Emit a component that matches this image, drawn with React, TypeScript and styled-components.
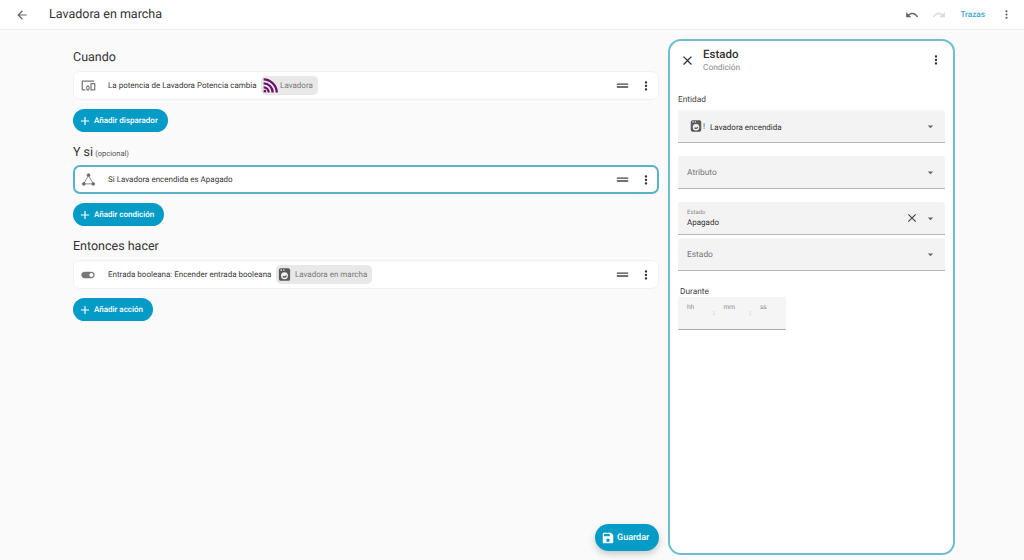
import React from "react";
import styled, { createGlobalStyle } from "styled-components";
import {
  MdAdd,
  MdArrowBack,
  MdArrowDropDown,
  MdClose,
  MdDevicesOther,
  MdDragHandle,
  MdMoreVert,
  MdRedo,
  MdSave,
  MdToggleOn,
  MdUndo,
} from "react-icons/md";

const GlobalStyle = createGlobalStyle`
  html, body {
    margin: 0;
    height: 100%;
    background: #fafafa;
    font-family: Roboto, "Noto Sans", sans-serif;
    color: #2b2b2b;
    text-rendering: geometricPrecision;
  }
  * { box-sizing: border-box; }
  button { text-rendering: geometricPrecision; }
`;

const Page = styled.div`
  width: 1024px;
  height: 560px;
  overflow: hidden;
  position: relative;
  background: #fafafa;
`;

const TopBar = styled.header`
  height: 30px;
  background: #fff;
  border-bottom: 1px solid #efefef;
  display: flex;
  align-items: center;
  padding: 0 11px 0 15px;
`;

const PageTitle = styled.h1`
  margin: 0 0 0 20px;
  font-size: 12.5px;
  font-weight: 400;
  flex: 1;
  color: #333;
`;

const TopIcon = styled.span<{ $faded?: boolean; $gap?: number }>`
  display: flex;
  color: ${(p) => (p.$faded ? "#d8d8d8" : "#666")};
  margin-left: ${(p) => p.$gap ?? 0}px;
`;

const TraceLink = styled.span`
  font-size: 8.2px;
  font-weight: 500;
  color: #3ba6c8;
  margin: 0 15px 0 14px;
`;

const Body = styled.div`
  display: flex;
  align-items: flex-start;
  padding: 9px 0 0 73px;
  gap: 9px;
`;

const Main = styled.main`
  width: 586px;
  padding-top: 10px;
`;

const SectionTitle = styled.h2<{ $top?: number; $bottom?: number }>`
  margin: ${(p) => p.$top ?? 0}px 0 ${(p) => p.$bottom ?? 6}px;
  height: 16px;
  line-height: 18px;
  font-size: 12.5px;
  font-weight: 400;
  color: #333;
  small {
    font-size: 7.5px;
    margin-left: -1px;
    color: #555;
  }
`;

const Card = styled.div<{ $active?: boolean }>`
  height: 29px;
  display: flex;
  align-items: center;
  background: #fff;
  border-radius: 7px;
  padding: ${(p) => (p.$active ? "0 4px 0 5px" : "0 5px 0 6px")};
  border: ${(p) => (p.$active ? "2px solid #58b3c9" : "1px solid #f1f1f1")};
`;

const RowIcon = styled.span`
  width: 16px;
  height: 16px;
  display: flex;
  align-items: center;
  justify-content: center;
  color: #777;
  flex: none;
`;

const RowText = styled.span`
  margin-left: 12px;
  font-size: 8px;
  color: #3a3a3a;
  white-space: nowrap;
`;

const Chip = styled.span<{ $gap: number; $pad: number }>`
  display: inline-flex;
  align-items: center;
  gap: ${(p) => p.$gap}px;
  height: 19px;
  margin-left: 4.5px;
  padding: 0 5px 0 ${(p) => p.$pad}px;
  border-radius: 5px;
  background: #e8e8e8;
  font-size: 8px;
  color: #7b7b7b;
  white-space: nowrap;
`;

const Handle = styled.span`
  margin-left: auto;
  display: flex;
  color: #444;
`;

const Kebab = styled.span`
  display: flex;
  margin-left: 8px;
  color: #333;
`;

const AddButton = styled.button`
  display: flex;
  align-items: center;
  gap: 2px;
  height: 23px;
  margin-top: 9px;
  padding: 0 10px 0 5px;
  border: none;
  border-radius: 12px;
  background: #049cc6;
  color: #fff;
  font-family: inherit;
  font-size: 8px;
  font-weight: 500;
`;

const Panel = styled.aside`
  width: 286.5px;
  height: 516px;
  background: #fff;
  border: 2px solid #6fbdcf;
  border-radius: 13px;
  padding: 0 8px;
`;

const PanelHead = styled.div`
  display: flex;
  align-items: center;
  height: 38px;
  padding-left: 1.5px;
`;

const PanelClose = styled.span`
  display: flex;
  color: #333;
`;

const PanelTitles = styled.div`
  margin-left: 8.5px;
  flex: 1;
`;

const PanelTitle = styled.div`
  font-size: 11.5px;
  font-weight: 500;
  line-height: 14px;
  color: #333;
`;

const PanelSub = styled.div`
  margin-top: 2px;
  font-size: 8.3px;
  line-height: 11px;
  color: #8a8a8a;
`;

const PanelKebab = styled.span`
  display: flex;
  color: #333;
  margin-right: 2px;
`;

const FieldLabel = styled.div<{ $top: number; $bottom: number; $left?: number }>`
  margin: ${(p) => p.$top}px 0 ${(p) => p.$bottom}px ${(p) => p.$left ?? 0}px;
  font-size: 8.3px;
  line-height: 10px;
  color: #444;
`;

const Select = styled.div<{ $top?: number }>`
  height: 33px;
  margin-top: ${(p) => p.$top ?? 0}px;
  display: flex;
  align-items: center;
  background: #f3f3f3;
  border-bottom: 1px solid #b5b5b5;
  border-radius: 3px 3px 0 0;
  padding: 0 8px 0 9px;
`;

const SelectBody = styled.div`
  flex: 1;
  min-width: 0;
`;

const SelectValue = styled.span<{ $muted?: boolean }>`
  display: block;
  padding-top: 2px;
  line-height: 11px;
  font-size: ${(p) => (p.$muted ? 8.4 : 8)}px;
  color: ${(p) => (p.$muted ? "#777" : "#333")};
`;

const FloatLabel = styled.div`
  margin-bottom: -2px;
  font-size: 6px;
  line-height: 8px;
  color: #8a8a8a;
`;

const SelectCaret = styled.span`
  display: flex;
  color: #666;
`;

const ClearIcon = styled.span`
  display: flex;
  color: #444;
  margin-right: 5px;
`;

const EntityIcon = styled.span`
  display: flex;
  align-items: center;
  margin: 0 5px 0 2px;
  color: #555;
  font-size: 8px;
`;

const TimeField = styled.div`
  width: 108px;
  height: 33px;
  display: flex;
  padding: 6px 0 0 9px;
  background: #f5f5f5;
  border-bottom: 1px solid #a9a9a9;
`;

const TimeUnit = styled.span`
  width: 36.5px;
  flex: none;
  display: flex;
  justify-content: space-between;
  font-size: 6.5px;
  color: #888;
  padding-right: 9px;
  i {
    font-style: normal;
    margin-top: 6px;
    color: #777;
  }
`;

const SaveButton = styled.button`
  position: absolute;
  left: 595px;
  top: 524px;
  width: 64px;
  height: 27px;
  display: flex;
  align-items: center;
  gap: 2px;
  padding: 0 0 0 6px;
  border: none;
  border-radius: 14px;
  background: #049cc6;
  color: #fff;
  font-family: inherit;
  font-size: 9px;
  font-weight: 500;
  box-shadow: 0 3px 7px rgba(0, 0, 0, 0.2);
`;

const WasherIcon = ({ size = 15 }: { size?: number }) => (
  <svg width={size} height={size} viewBox="0 0 24 24">
    <rect x="3" y="2" width="18" height="20" rx="3" fill="#5a5a5a" />
    <rect x="5.5" y="4" width="2.5" height="2" fill="#e8e8e8" />
    <rect x="10" y="4" width="2" height="2" fill="#e8e8e8" />
    <circle cx="12" cy="14" r="5.5" fill="#f2f2f2" />
    <path d="M8.5 15.5 C11 13 13 17 15.5 12.5 L15.5 15 A4 4 0 0 1 8.5 15.5Z" fill="#5a5a5a" />
  </svg>
);

const SignalLogo = () => (
  <svg width="15" height="15" viewBox="0 0 24 24" fill="none" stroke="#6a1466" strokeWidth="3.6">
    <path d="M1 2 C12 2 22 12 22 23" />
    <path d="M1 8.5 C9 8.5 15.5 15 15.5 23" />
    <path d="M1 15 C5.5 15 9 18.5 9 23" />
    <rect x="1" y="19" width="4" height="4" fill="#6a1466" stroke="none" />
  </svg>
);

const ConditionIcon = () => (
  <svg width="15" height="15" viewBox="0 0 24 24" fill="none" stroke="#777" strokeWidth="1.3">
    <path d="M12 5 L4.5 19 H19.5 Z" />
    <circle cx="12" cy="5" r="2.3" fill="#666" />
    <circle cx="4.5" cy="19" r="2.3" fill="#666" />
    <circle cx="19.5" cy="19" r="2.3" fill="#666" />
  </svg>
);

function App() {
  return (
    <Page>
      <GlobalStyle />
      <TopBar>
        <TopIcon>
          <MdArrowBack size={14} />
        </TopIcon>
        <PageTitle>Lavadora en marcha</PageTitle>
        <TopIcon>
          <MdUndo size={14} />
        </TopIcon>
        <TopIcon $faded $gap={13}>
          <MdRedo size={14} />
        </TopIcon>
        <TraceLink>Trazas</TraceLink>
        <TopIcon>
          <MdMoreVert size={13} />
        </TopIcon>
      </TopBar>
      <Body>
        <Main>
          <SectionTitle>Cuando</SectionTitle>
          <Card>
            <RowIcon>
              <MdDevicesOther size={15} />
            </RowIcon>
            <RowText>La potencia de Lavadora Potencia cambia</RowText>
            <Chip $gap={2} $pad={2}>
              <SignalLogo />
              Lavadora
            </Chip>
            <Handle>
              <MdDragHandle size={17} />
            </Handle>
            <Kebab>
              <MdMoreVert size={14} />
            </Kebab>
          </Card>
          <AddButton>
            <MdAdd size={14} />
            Añadir disparador
          </AddButton>

          <SectionTitle $top={12} $bottom={5}>
            Y si <small>(opcional)</small>
          </SectionTitle>
          <Card $active>
            <RowIcon>
              <ConditionIcon />
            </RowIcon>
            <RowText>Si Lavadora encendida es Apagado</RowText>
            <Handle>
              <MdDragHandle size={17} />
            </Handle>
            <Kebab>
              <MdMoreVert size={14} />
            </Kebab>
          </Card>
          <AddButton>
            <MdAdd size={14} />
            Añadir condición
          </AddButton>

          <SectionTitle $top={12}>Entonces hacer</SectionTitle>
          <Card>
            <RowIcon>
              <MdToggleOn size={16} />
            </RowIcon>
            <RowText>Entrada booleana: Encender entrada booleana</RowText>
            <Chip $gap={3} $pad={1}>
              <WasherIcon />
              Lavadora en marcha
            </Chip>
            <Handle>
              <MdDragHandle size={17} />
            </Handle>
            <Kebab>
              <MdMoreVert size={14} />
            </Kebab>
          </Card>
          <AddButton>
            <MdAdd size={14} />
            Añadir acción
          </AddButton>
        </Main>

        <Panel>
          <PanelHead>
            <PanelClose>
              <MdClose size={15} />
            </PanelClose>
            <PanelTitles>
              <PanelTitle>Estado</PanelTitle>
              <PanelSub>Condición</PanelSub>
            </PanelTitles>
            <PanelKebab>
              <MdMoreVert size={14} />
            </PanelKebab>
          </PanelHead>

          <FieldLabel $top={16} $bottom={5}>
            Entidad
          </FieldLabel>
          <Select>
            <EntityIcon>
              <WasherIcon size={14} />!
            </EntityIcon>
            <SelectBody>
              <SelectValue>Lavadora encendida</SelectValue>
            </SelectBody>
            <SelectCaret>
              <MdArrowDropDown size={13} />
            </SelectCaret>
          </Select>
          <Select $top={13}>
            <SelectBody>
              <SelectValue $muted>Atributo</SelectValue>
            </SelectBody>
            <SelectCaret>
              <MdArrowDropDown size={13} />
            </SelectCaret>
          </Select>
          <Select $top={13}>
            <SelectBody>
              <FloatLabel>Estado</FloatLabel>
              <SelectValue>Apagado</SelectValue>
            </SelectBody>
            <ClearIcon>
              <MdClose size={14} />
            </ClearIcon>
            <SelectCaret>
              <MdArrowDropDown size={13} />
            </SelectCaret>
          </Select>
          <Select $top={3}>
            <SelectBody>
              <SelectValue $muted>Estado</SelectValue>
            </SelectBody>
            <SelectCaret>
              <MdArrowDropDown size={13} />
            </SelectCaret>
          </Select>

          <FieldLabel $top={16} $bottom={0} $left={2}>
            Durante
          </FieldLabel>
          <TimeField>
            <TimeUnit>
              hh<i>:</i>
            </TimeUnit>
            <TimeUnit>
              mm<i>:</i>
            </TimeUnit>
            <TimeUnit>ss</TimeUnit>
          </TimeField>
        </Panel>
      </Body>
      <SaveButton>
        <MdSave size={14} />
        Guardar
      </SaveButton>
    </Page>
  );
}

export default App;
